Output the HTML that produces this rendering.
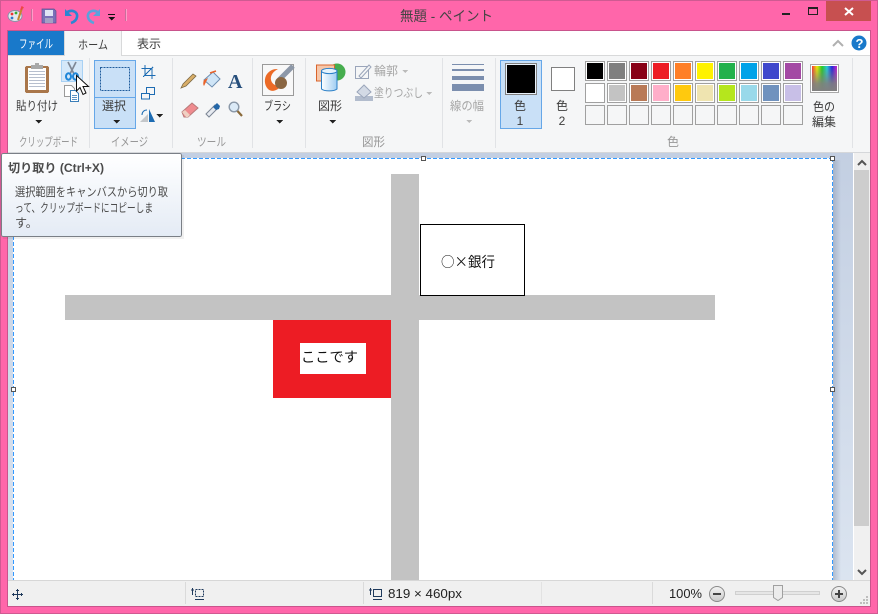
<!DOCTYPE html>
<html><head><meta charset="utf-8"><style>
html,body{margin:0;padding:0;background:#ff66aa;width:878px;height:614px;overflow:hidden}
svg{display:block;position:absolute;left:0;top:0}
text{font-family:"Liberation Sans","Noto Sans CJK JP",sans-serif;font-size:12px;fill:#3c3c3c}
.g{fill:#979797}
.d{fill:#a6a6a6}
</style></head><body>
<svg width="878" height="614" viewBox="0 0 878 614" xmlns="http://www.w3.org/2000/svg" shape-rendering="crispEdges">
<defs>
<linearGradient id="tip" x1="0" y1="0" x2="0" y2="1"><stop offset="0" stop-color="#fff"/><stop offset="1" stop-color="#e4ebf5"/></linearGradient>
<linearGradient id="rb" x1="0" y1="0" x2="1" y2="0"><stop offset="0" stop-color="#f33"/><stop offset=".2" stop-color="#ee0"/><stop offset=".4" stop-color="#2c2"/><stop offset=".6" stop-color="#2cd"/><stop offset=".8" stop-color="#22d"/><stop offset="1" stop-color="#c2c"/></linearGradient>
<linearGradient id="rb2" x1="0" y1="0" x2="0" y2="1"><stop offset="0" stop-color="#808080" stop-opacity="0"/><stop offset=".7" stop-color="#808080" stop-opacity=".9"/><stop offset="1" stop-color="#808080"/></linearGradient>
<linearGradient id="cyl" x1="0" y1="0" x2="1" y2="0"><stop offset="0" stop-color="#fff"/><stop offset="1" stop-color="#9fcdf2"/></linearGradient>
<linearGradient id="knob" x1="0" y1="0" x2="0" y2="1"><stop offset="0" stop-color="#f4f4f4"/><stop offset="1" stop-color="#c8c8c8"/></linearGradient>
<linearGradient id="bgv" x1="0" y1="0" x2="0" y2="1"><stop offset="0" stop-color="#c3cfe2"/><stop offset="1" stop-color="#dbe4f0"/></linearGradient>
<linearGradient id="shad" x1="0" y1="0" x2="1" y2="0"><stop offset="0" stop-color="#8c9ab2" stop-opacity=".55"/><stop offset="1" stop-color="#8c9ab2" stop-opacity="0"/></linearGradient>
</defs>

<!-- frame -->
<rect width="878" height="614" fill="#ff66aa"/>
<rect width="878" height="1" fill="#cf5a92"/><rect y="613" width="878" height="1" fill="#cf5a92"/>
<rect x="0" width="1" height="614" fill="#cf5a92"/><rect x="877" width="1" height="614" fill="#cf5a92"/>
<rect x="7" y="30" width="864" height="577" fill="#c9548c"/>

<!-- title -->
<text x="400" y="21" textLength="93" lengthAdjust="spacingAndGlyphs" style="font-size:14px;fill:#444">無題 - ペイント</text>
<rect x="826" y="1" width="45" height="20" fill="#c75050"/>
<path d="M845 8l8 7M853 8l-8 7" stroke="#fff" stroke-width="2" shape-rendering="auto"/>
<rect x="782" y="13" width="8" height="2" fill="#222"/>
<rect x="808.500" y="8.500" width="9" height="6" fill="none" stroke="#222"/><rect x="808" y="7" width="10" height="2" fill="#222"/>

<!-- QAT -->
<g shape-rendering="auto">
<ellipse cx="15" cy="16" rx="7" ry="5.500" fill="#e4e7ee" stroke="#8b91a8"/>
<circle cx="12" cy="14" r="1.400" fill="#e33"/><circle cx="16" cy="13" r="1.400" fill="#3a3"/><circle cx="12" cy="18" r="1.400" fill="#37c"/>
<path d="M18 20L22 8" stroke="#c5842e" stroke-width="2"/><path d="M21 10l1-3 1.500 1" stroke="#e44" stroke-width="1.500" fill="none"/>
<path d="M42 9h12l2 2v12H42z" fill="#7a70b8" stroke="#5b5393" stroke-width=".7"/>
<rect x="45" y="10" width="8" height="6" fill="#dfe4f4"/><rect x="45" y="18" width="8" height="5" fill="#a3a0c4"/>
<path d="M66 13c5-4 12-2 11 4-.5 3-3 5-6 6" fill="none" stroke="#2a86d3" stroke-width="2.600"/><path d="M65 9v7h7z" fill="#2a86d3"/>
<path d="M99 13c-5-4-12-2-11 4 .5 3 3 5 6 6" fill="none" stroke="#5aa2dc" stroke-width="2.600"/><path d="M100 9v7h-7z" fill="#5aa2dc"/>
</g>
<rect x="31" y="9" width="1" height="12" fill="#c96f9c"/><rect x="32" y="9" width="1" height="12" fill="#ff9cc8"/>
<rect x="125" y="9" width="1" height="12" fill="#c96f9c"/><rect x="126" y="9" width="1" height="12" fill="#ff9cc8"/>
<rect x="108" y="14" width="7" height="1" fill="#111"/><path d="M108 17h7l-3.500 3.500z" fill="#111"/>

<!-- window client -->
<rect x="8" y="31" width="862" height="575" fill="#fff"/>
<rect x="8" y="31" width="56" height="24" fill="#1979ca"/>
<text x="19" y="48" textLength="34" lengthAdjust="spacingAndGlyphs" style="fill:#fff">ファイル</text>
<rect x="64" y="31" width="58" height="25" fill="#f5f6f7"/>
<rect x="64" y="31" width="1" height="25" fill="#d8d9da"/><rect x="121" y="31" width="1" height="25" fill="#d8d9da"/>
<text x="78" y="49" textLength="30" lengthAdjust="spacingAndGlyphs">ホーム</text>
<text x="137" y="48" textLength="24" lengthAdjust="spacingAndGlyphs">表示</text>
<path d="M833 46l5-5 5 5" fill="none" stroke="#b0b0b0" stroke-width="2" shape-rendering="auto"/>
<circle cx="859" cy="43" r="7.500" fill="#1979ca" shape-rendering="auto"/>
<text x="855.500" y="48" style="font-size:13px;font-weight:bold;fill:#fff">?</text>

<!-- ribbon -->
<rect x="8" y="55" width="862" height="1" fill="#d8d9da"/><rect x="65" y="55" width="56" height="1" fill="#f5f6f7"/>
<rect x="8" y="56" width="862" height="96" fill="#f5f6f7"/>
<rect x="8" y="152" width="862" height="1" fill="#d5d7da"/>
<rect x="89" y="58" width="1" height="90" fill="#e1e3e6"/><rect x="172" y="58" width="1" height="90" fill="#e1e3e6"/>
<rect x="252" y="58" width="1" height="90" fill="#e1e3e6"/><rect x="305" y="58" width="1" height="90" fill="#e1e3e6"/>
<rect x="442" y="58" width="1" height="90" fill="#e1e3e6"/><rect x="495" y="58" width="1" height="90" fill="#e1e3e6"/>
<rect x="852" y="58" width="1" height="90" fill="#e1e3e6"/>

<text x="19" y="146" textLength="59" lengthAdjust="spacingAndGlyphs" class="g">クリップボード</text>
<text x="111" y="146" textLength="37" lengthAdjust="spacingAndGlyphs" class="g">イメージ</text>
<text x="197" y="146" textLength="29" lengthAdjust="spacingAndGlyphs" class="g">ツール</text>
<text x="362" y="146" textLength="23" lengthAdjust="spacingAndGlyphs" class="g">図形</text>
<text x="667" y="146" textLength="12" lengthAdjust="spacingAndGlyphs" class="g">色</text>

<!-- clipboard -->
<rect x="25" y="66" width="24" height="27" rx="2" fill="#a9764a"/>
<rect x="28" y="68" width="18" height="22" fill="#fff"/>
<path d="M29 71.500h16M29 74.500h16M29 77.500h16M29 80.500h16M29 83.500h16M29 86.500h16" stroke="#b7bfce"/>
<rect x="31" y="65" width="12" height="4" fill="#a8a8a8"/><rect x="35" y="63" width="4" height="3" fill="#a8a8a8"/>
<text x="16" y="110" textLength="42" lengthAdjust="spacingAndGlyphs">貼り付け</text>
<path d="M35 120h7l-3.500 3.500z" fill="#222"/>

<!-- cut -->
<rect x="61.500" y="60.500" width="21" height="21" fill="#d5e8f9" stroke="#a8d1f4"/>
<g shape-rendering="auto" fill="none">
<path d="M68 62l6 12M76 62l-6 12" stroke="#7f8896" stroke-width="1.700"/>
<ellipse cx="68.500" cy="76.500" rx="2.500" ry="3.200" stroke="#1f86d8" stroke-width="2"/><ellipse cx="75.500" cy="76.500" rx="2.500" ry="3.200" stroke="#1f86d8" stroke-width="2"/>
</g>
<!-- copy -->
<path d="M64.500 85.500h7l3 3v8h-10z" fill="#fff" stroke="#9a9a9a"/>
<path d="M70.500 90.500h5l3 3v8h-8z" fill="#fff" stroke="#3b7fb9"/>
<path d="M72 95.500h5M72 97.500h5M72 99.500h5" stroke="#5c93c4"/>
<!-- cursor -->
<path d="M76.500 75.500v15.500l3.500-3.500 3 7 3-1.500-3-6.500h5.500z" fill="#fff" stroke="#111" shape-rendering="auto"/>

<!-- select -->
<rect x="94.500" y="60.500" width="41" height="68" fill="#c9e0f7" stroke="#66a7e8"/>
<rect x="95" y="97" width="40" height="1" fill="#66a7e8"/>
<rect x="100.500" y="67.500" width="29" height="23" fill="#c9e0f7" stroke="#1f5c9c" stroke-dasharray="2 1"/>
<text x="102" y="110" textLength="24" lengthAdjust="spacingAndGlyphs">選択</text>
<path d="M113 120h7l-3.500 3.500z" fill="#222"/>

<!-- image tools -->
<path d="M145 65v10.500h10.500M141.500 68.500H152V79M143 77l10-10" fill="none" stroke="#1d6cb3" stroke-width="1.200"/>
<rect x="146.500" y="87.500" width="8" height="7" fill="none" stroke="#1d6cb3"/>
<rect x="141.500" y="93.500" width="8" height="5.500" fill="#f5f6f7" stroke="#1d6cb3"/>
<path d="M140 122l8-8v8z" fill="#c4c7ca" shape-rendering="auto"/>
<path d="M149 122v-13l6 13z" fill="#1d6cb3" shape-rendering="auto"/>
<path d="M142 115c0-3 2-5 5-5" fill="none" stroke="#1d6cb3" shape-rendering="auto"/>
<path d="M156 114h7l-3.500 3.500z" fill="#222"/>

<!-- tools -->
<g shape-rendering="auto">
<path d="M181 88l2-4 10-10 3 2-10 10z" fill="#d9ae68" stroke="#7d6a45" stroke-width=".8"/>
<path d="M204 80l9-8 7 7-8 8z" fill="#cfe5f7" stroke="#6c8db0"/><path d="M204 80c-1 2-1 5 0 6l4-8z" fill="#e8642c"/><path d="M210 73l6-2" stroke="#e8642c" stroke-width="1.500"/>
<path d="M182 112l10-9 6 5-10 9h-4z" fill="#ef8b8f" stroke="#b77a7a"/><path d="M182 112l4 5h2l2-2-5-5z" fill="#efd0c2"/>
<path d="M206 114l9-9 3 3-9 9z" fill="#e6eaf0" stroke="#7b8594"/><path d="M213 107l4-4 3 3-1 3-3 1z" fill="#2467a8"/>
<circle cx="234" cy="107" r="4.800" fill="#dbeaf7" stroke="#8a98a8" stroke-width="1.400"/><path d="M237.500 111l4.500 5" stroke="#8a6a3a" stroke-width="2.200"/>
</g>
<text x="228" y="88" style="font-family:'Liberation Serif',serif;font-weight:bold;font-size:20px;fill:#274f7c">A</text>

<!-- brush -->
<rect x="262.500" y="64.500" width="31" height="31" fill="#f8f8f8" stroke="#9a9a9a"/>
<g shape-rendering="auto">
<path d="M293 66l-14 14" stroke="#8d98a8" stroke-width="5"/>
<path d="M267 74c4-5 8-5 11-5-4 2-8 6-7 11 1 4 5 7 10 5-2 5-9 8-13 4-4-4-4-11-1-15z" fill="#ec6a26"/>
<circle cx="281" cy="83" r="6" fill="#8a6642"/>
</g>
<text x="264" y="110" textLength="27" lengthAdjust="spacingAndGlyphs">ブラシ</text>
<path d="M276 120h7l-3.500 3.500z" fill="#222"/>

<!-- shapes -->
<g shape-rendering="auto">
<circle cx="337" cy="72" r="8.500" fill="#46ad4e"/>
<rect x="316.500" y="65" width="18" height="16" fill="#f6c7aa" stroke="#d9642c"/>
<path d="M321.500 71h15.500v18c-3 2.500-12.500 2.500-15.500 0z" fill="url(#cyl)" stroke="#2a7fc7"/>
<ellipse cx="329.250" cy="71" rx="7.750" ry="2.600" fill="#e6f3fc" stroke="#2a7fc7"/>
</g>
<text x="318" y="110" textLength="24" lengthAdjust="spacingAndGlyphs">図形</text>
<path d="M329 120h7l-3.500 3.500z" fill="#222"/>
<g shape-rendering="auto">
<rect x="355.500" y="66.500" width="13" height="12" fill="none" stroke="#9aa5ba"/>
<path d="M359 76l10-11 2 2-10 11z" fill="#f5f6f7" stroke="#9aa5ba"/>
<rect x="355" y="96" width="18" height="5" fill="#b2bccd"/>
<path d="M364 85l7 7-7 6-7-6z" fill="#d3dae5" stroke="#9aa5ba"/>
</g>
<text x="374" y="75" textLength="24" lengthAdjust="spacingAndGlyphs" class="d">輪郭</text>
<path d="M402 70h6l-3 3z" fill="#bbb"/>
<text x="374" y="97" textLength="49" lengthAdjust="spacingAndGlyphs" class="d">塗りつぶし</text>
<path d="M426 92h6l-3 3z" fill="#bbb"/>

<!-- line width -->
<rect x="452" y="64" width="32" height="1" fill="#7b8eae"/>
<rect x="452" y="69" width="32" height="2" fill="#7b8eae"/>
<rect x="452" y="76" width="32" height="4" fill="#7b8eae"/>
<rect x="452" y="84" width="32" height="7" fill="#7b8eae"/>
<text x="450" y="110" textLength="34" lengthAdjust="spacingAndGlyphs" class="d">線の幅</text>
<path d="M466 120h6l-3 3z" fill="#bbb"/>

<!-- color 1/2 -->
<rect x="500.500" y="60.500" width="41" height="68" fill="#c9e0f7" stroke="#66a7e8"/>
<rect x="505.500" y="63.500" width="31" height="31" fill="#e8f1fa" stroke="#808080"/>
<rect x="507" y="65" width="28" height="28" fill="#000"/>
<text x="520" y="110" text-anchor="middle">色</text><text x="520" y="125" text-anchor="middle">1</text>
<rect x="551.500" y="67.500" width="23" height="23" fill="#fff" stroke="#808080"/>
<text x="562" y="110" text-anchor="middle">色</text><text x="562" y="125" text-anchor="middle">2</text>

<!-- palette -->
<g stroke="#a0a0a0" fill="#fff">
<rect x="585.500" y="61.500" width="19" height="19"/><rect x="607.500" y="61.500" width="19" height="19"/><rect x="629.500" y="61.500" width="19" height="19"/><rect x="651.500" y="61.500" width="19" height="19"/><rect x="673.500" y="61.500" width="19" height="19"/><rect x="695.500" y="61.500" width="19" height="19"/><rect x="717.500" y="61.500" width="19" height="19"/><rect x="739.500" y="61.500" width="19" height="19"/><rect x="761.500" y="61.500" width="19" height="19"/><rect x="783.500" y="61.500" width="19" height="19"/>
<rect x="585.500" y="83.500" width="19" height="19"/><rect x="607.500" y="83.500" width="19" height="19"/><rect x="629.500" y="83.500" width="19" height="19"/><rect x="651.500" y="83.500" width="19" height="19"/><rect x="673.500" y="83.500" width="19" height="19"/><rect x="695.500" y="83.500" width="19" height="19"/><rect x="717.500" y="83.500" width="19" height="19"/><rect x="739.500" y="83.500" width="19" height="19"/><rect x="761.500" y="83.500" width="19" height="19"/><rect x="783.500" y="83.500" width="19" height="19"/>
</g>
<g stroke="#a0a0a0" fill="#f5f6f7">
<rect x="585.500" y="105.500" width="19" height="19"/><rect x="607.500" y="105.500" width="19" height="19"/><rect x="629.500" y="105.500" width="19" height="19"/><rect x="651.500" y="105.500" width="19" height="19"/><rect x="673.500" y="105.500" width="19" height="19"/><rect x="695.500" y="105.500" width="19" height="19"/><rect x="717.500" y="105.500" width="19" height="19"/><rect x="739.500" y="105.500" width="19" height="19"/><rect x="761.500" y="105.500" width="19" height="19"/><rect x="783.500" y="105.500" width="19" height="19"/>
</g>
<rect x="587" y="63" width="16" height="16" fill="#000"/><rect x="609" y="63" width="16" height="16" fill="#7f7f7f"/><rect x="631" y="63" width="16" height="16" fill="#880015"/><rect x="653" y="63" width="16" height="16" fill="#ed1c24"/><rect x="675" y="63" width="16" height="16" fill="#ff7f27"/><rect x="697" y="63" width="16" height="16" fill="#fff200"/><rect x="719" y="63" width="16" height="16" fill="#22b14c"/><rect x="741" y="63" width="16" height="16" fill="#00a2e8"/><rect x="763" y="63" width="16" height="16" fill="#3f48cc"/><rect x="785" y="63" width="16" height="16" fill="#a349a4"/>
<rect x="587" y="85" width="16" height="16" fill="#fff"/><rect x="609" y="85" width="16" height="16" fill="#c3c3c3"/><rect x="631" y="85" width="16" height="16" fill="#b97a57"/><rect x="653" y="85" width="16" height="16" fill="#ffaec9"/><rect x="675" y="85" width="16" height="16" fill="#ffc90e"/><rect x="697" y="85" width="16" height="16" fill="#efe4b0"/><rect x="719" y="85" width="16" height="16" fill="#b5e61d"/><rect x="741" y="85" width="16" height="16" fill="#99d9ea"/><rect x="763" y="85" width="16" height="16" fill="#7092be"/><rect x="785" y="85" width="16" height="16" fill="#c8bfe7"/>

<rect x="810.500" y="64.500" width="28" height="28" fill="#fff" stroke="#a8a8a8"/>
<rect x="812" y="66" width="25" height="25" fill="url(#rb)"/>
<rect x="812" y="66" width="25" height="25" fill="url(#rb2)"/>
<text x="813" y="111" textLength="22" lengthAdjust="spacingAndGlyphs">色の</text><text x="812" y="126" textLength="24" lengthAdjust="spacingAndGlyphs">編集</text>

<!-- canvas area -->
<rect x="8" y="153" width="845" height="427" fill="url(#bgv)"/>
<rect x="833" y="160" width="8" height="420" fill="url(#shad)"/>
<rect x="13" y="158" width="820" height="422" fill="#fff"/>
<path d="M13 158.500h820M832.500 158v422M13.500 158v422" stroke="#39f" stroke-dasharray="4 2" fill="none"/>

<!-- drawing -->
<rect x="391" y="174" width="28" height="406" fill="#c3c3c3"/>
<rect x="65" y="295" width="650" height="25" fill="#c3c3c3"/>
<rect x="420.500" y="224.500" width="104" height="71" fill="#fff" stroke="#000"/>
<text x="441" y="267" textLength="54" lengthAdjust="spacingAndGlyphs" style="font-family:'Noto Sans CJK JP',sans-serif;font-size:14px;fill:#111">○×銀行</text>
<rect x="273" y="320" width="118" height="78" fill="#ed1c24"/>
<rect x="300" y="343" width="66" height="31" fill="#fff"/>
<text x="301" y="362" textLength="57" lengthAdjust="spacingAndGlyphs" style="font-size:14px;fill:#111">ここです</text>

<!-- handles -->
<rect x="421.500" y="156.500" width="4" height="4" fill="#fff" stroke="#555"/>
<rect x="830.500" y="156.500" width="4" height="4" fill="#fff" stroke="#555"/>
<rect x="830.500" y="387.500" width="4" height="4" fill="#fff" stroke="#555"/>
<rect x="11.500" y="387.500" width="4" height="4" fill="#fff" stroke="#555"/>

<!-- scrollbar -->
<rect x="853" y="153" width="17" height="427" fill="#f0f0f0"/>
<rect x="853" y="153" width="1" height="427" fill="#fff"/>
<rect x="854" y="170" width="15" height="356" fill="#cdcdcd"/>
<path d="M858 165l4-4 4 4" fill="none" stroke="#555" stroke-width="2" shape-rendering="auto"/>
<path d="M858 570l4 4 4-4" fill="none" stroke="#555" stroke-width="2" shape-rendering="auto"/>

<!-- status bar -->
<rect x="8" y="580" width="862" height="26" fill="#f0f0f0"/>
<rect x="8" y="580" width="862" height="1" fill="#d7d7d7"/>
<rect x="185" y="582" width="1" height="22" fill="#dadada"/><rect x="363" y="582" width="1" height="22" fill="#dadada"/>
<rect x="541" y="582" width="1" height="22" fill="#e2e2e2"/><rect x="652" y="582" width="1" height="22" fill="#dadada"/>
<path d="M17.500 589v11M12 594.500h11" stroke="#1f3a5c"/>
<path d="M16 590.500h3M16 598.500h3M13.500 593v3M21.500 593v3" stroke="#1f3a5c"/>
<rect x="195.500" y="589.500" width="8" height="7" fill="none" stroke="#1f3a5c" stroke-dasharray="2 1"/>
<path d="M192.500 588v7M191 590h3M195 599.500h9" stroke="#1f3a5c"/>
<rect x="373.500" y="589.500" width="8" height="7" fill="none" stroke="#1f3a5c"/>
<path d="M370.500 588v7M369 590h3M373 599.500h9" stroke="#1f3a5c"/>
<text x="388" y="598" textLength="74" lengthAdjust="spacingAndGlyphs" style="font-size:12.500px;fill:#222">819 × 460px</text>
<text x="669" y="598" textLength="33" lengthAdjust="spacingAndGlyphs" style="font-size:12.500px;fill:#222">100%</text>
<g shape-rendering="auto">
<circle cx="717" cy="594" r="7.500" fill="url(#knob)" stroke="#8a8a8a"/>
<path d="M713 594h8" stroke="#444" stroke-width="2"/>
<circle cx="839" cy="594" r="7.500" fill="url(#knob)" stroke="#8a8a8a"/>
<path d="M835 594h8M839 590v8" stroke="#444" stroke-width="2"/>
</g>
<rect x="735.500" y="591.500" width="84" height="3" fill="#e6e6e6" stroke="#d0d0d0"/>
<path d="M773.500 585.500h9v12l-4.500 3-4.500-3z" fill="#ececec" stroke="#a0a0a0" shape-rendering="auto"/>
<path d="M866 596h2v2h-2zM863 599h2v2h-2zM866 599h2v2h-2zM860 602h2v2h-2zM863 602h2v2h-2zM866 602h2v2h-2z" fill="#bdbdbd"/>

<!-- tooltip -->
<rect x="3" y="155" width="181" height="84" fill="#000" opacity=".06"/>
<rect x="1.500" y="153.500" width="180" height="83" rx="2" fill="url(#tip)" stroke="#7a7f86"/>
<text x="8" y="172" textLength="96" lengthAdjust="spacingAndGlyphs" style="font-weight:bold;fill:#4b4b4b">切り取り (Ctrl+X)</text>
<text x="15" y="196" textLength="153" lengthAdjust="spacingAndGlyphs" style="fill:#4b4b4b">選択範囲をキャンバスから切り取</text>
<text x="15" y="212" textLength="138" lengthAdjust="spacingAndGlyphs" style="fill:#4b4b4b">って、クリップボードにコピーしま</text>
<text x="15" y="227" style="fill:#4b4b4b">す。</text>
</svg>
</body></html>
